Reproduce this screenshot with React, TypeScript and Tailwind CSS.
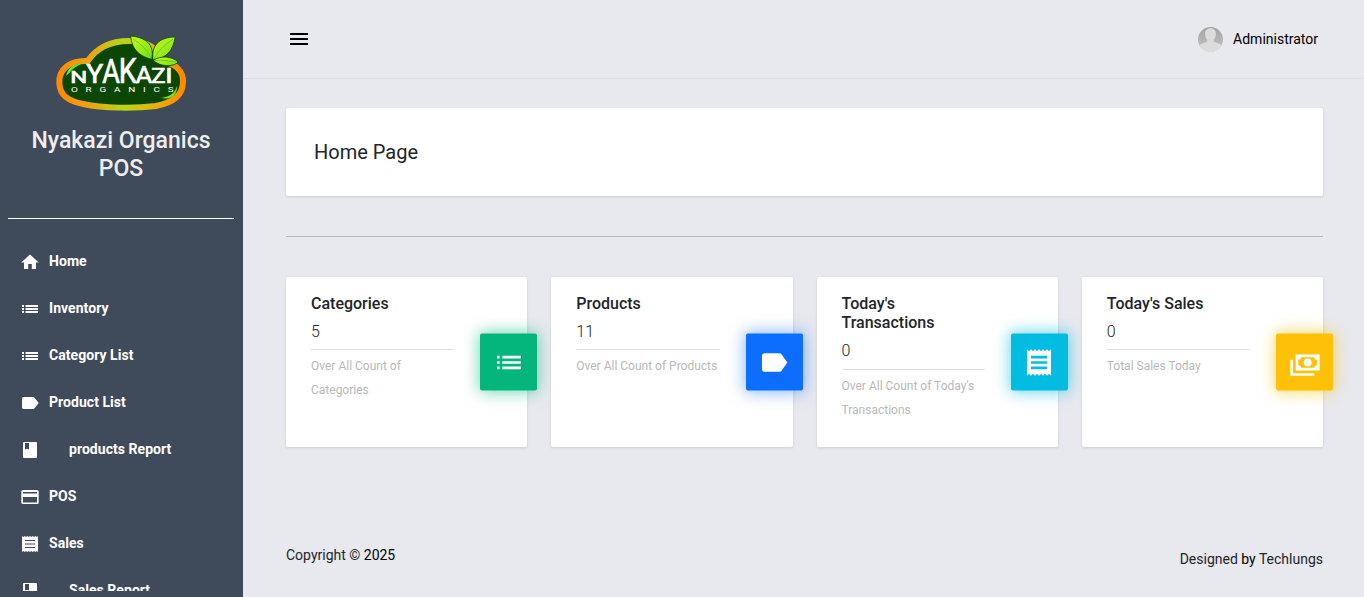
import React from "react";

const LIST = "M3 7h2v2H3zM3 11h2v2H3zM3 15h2v2H3zM7 7h14v2H7zM7 11h14v2H7zM7 15h14v2H7z";
const LABEL =
  "M17.63 5.84C17.27 5.33 16.67 5 16 5H5c-1.1 0-2 .9-2 2v10c0 1.1.9 2 2 2h11c.67 0 1.27-.33 1.63-.84L22 12z";
const RECEIPT =
  "M18 17H6v-2h12v2zm0-4H6v-2h12v2zm0-4H6V7h12v2zM3 22l1.5-1.5L6 22l1.5-1.5L9 22l1.5-1.5L12 22l1.5-1.5L15 22l1.5-1.5L18 22l1.5-1.5L21 22V2l-1.5 1.5L18 2l-1.5 1.5L15 2l-1.5 1.5L12 2l-1.5 1.5L9 2 7.5 3.5 6 2 4.5 3.5 3 2v20z";
const CASH =
  "M5 6H23V18H5V6M14 9A3 3 0 0 1 17 12A3 3 0 0 1 14 15A3 3 0 0 1 11 12A3 3 0 0 1 14 9M9 8A2 2 0 0 1 7 10V14A2 2 0 0 1 9 16H19A2 2 0 0 1 21 14V10A2 2 0 0 1 19 8H9M1 10H3V20H19V22H1V10Z";

function Icon({ d, className }: { d: string; className: string }) {
  return (
    <svg viewBox="0 0 24 24" fill="currentColor" fillRule="evenodd" className={className}>
      <path d={d} />
    </svg>
  );
}

const small = {
  home: <path d="M8.2 17v-5h3.6v5H16v-6.5h2.8L10 2.6 1.2 10.5H4V17z" />,
  list: <path d="M2 6h2v2H2zM2 9h2v2H2zM2 12h2v2H2zM5.5 6H18v2H5.5zM5.5 9H18v2H5.5zM5.5 12H18v2H5.5z" />,
  label: <path d="M14.5 4.7C14.2 4.3 13.8 4 13.2 4H3.5C2.7 4 2 4.7 2 5.500v9c0 .8.7 1.500 1.500 1.500h9.700c.6 0 1-.3 1.300-.7L18.700 10z" />,
  book: <path fillRule="evenodd" d="M4 2h12q1 0 1 1v14q0 1-1 1H4q-1 0-1-1V3q0-1 1-1zM5 3v6.500l2-.8 2 .8V3z" />,
  card: <path fillRule="evenodd" d="M3 3h14q1.700 0 1.700 1.500v11q0 1.500-1.700 1.500H3q-1.700 0-1.700-1.500v-11Q1.300 3 3 3zM3 5v1.500h14V5zM3 10v5.500h14V10z" />,
  receipt: (
    <path
      fillRule="evenodd"
      d="M2 2l1.330 1 1.330-1L6 3l1.330-1 1.330 1L10 2l1.330 1 1.330-1L14 3l1.330-1 1.330 1L18 2v16l-1.330-1-1.330 1L14 17l-1.330 1-1.330-1L10 18l-1.330-1-1.330 1L6 17l-1.330 1-1.330-1L2 18zM5 6v1h10V6zM5 9.500v1h10v-1zM5 13v1h10v-1z"
    />
  ),
};

const menu: { label: string; icon: keyof typeof small; nested?: boolean }[] = [
  { label: "Home", icon: "home" },
  { label: "Inventory", icon: "list" },
  { label: "Category List", icon: "list" },
  { label: "Product List", icon: "label" },
  { label: "products Report", icon: "book", nested: true },
  { label: "POS", icon: "card" },
  { label: "Sales", icon: "receipt" },
  { label: "Sales Report", icon: "book", nested: true },
];

const stats = [
  { title: "Categories", value: 5, note: "Over All Count of Categories", d: LIST, box: "bg-[#04b67c] shadow-[0_0_16px_1px_rgba(4,182,124,0.55)]" },
  { title: "Products", value: 11, note: "Over All Count of Products", d: LABEL, box: "bg-[#0d6efd] shadow-[0_0_16px_1px_rgba(13,110,253,0.5)]" },
  { title: "Today's Transactions", value: 0, note: "Over All Count of Today's Transactions", d: RECEIPT, box: "bg-[#02bce2] shadow-[0_0_16px_1px_rgba(2,188,226,0.6)]" },
  { title: "Today's Sales", value: 0, note: "Total Sales Today", d: CASH, box: "bg-[#ffc107] shadow-[0_0_16px_1px_rgba(255,193,7,0.6)]" },
];

function Logo() {
  return (
    <svg viewBox="0 0 480 285" className="-ml-[2px] h-[95px] w-[160px] shrink-0">
      <defs>
        <linearGradient id="rim" x1="0" y1="0" x2="1" y2="0">
          <stop offset="0" stopColor="#ff8a00" />
          <stop offset="0.22" stopColor="#f0a010" />
          <stop offset="0.52" stopColor="#b4d816" />
          <stop offset="0.78" stopColor="#e8b010" />
          <stop offset="1" stopColor="#ff8a00" />
        </linearGradient>
        <linearGradient id="leaf" x1="0" y1="0" x2="1" y2="1">
          <stop offset="0" stopColor="#c8fa18" />
          <stop offset="1" stopColor="#70e020" />
        </linearGradient>
      </defs>
      <path
        d="M58 175C56 132 88 106 143 108C172 66 215 47 270 48C325 48 352 70 365 109C407 116 431 139 429 172C428 218 389 235 347 243C283 251 190 250 130 237C84 228 60 211 58 175Z"
        fill="#0b4703"
        stroke="url(#rim)"
        strokeWidth="18"
      />
      <path d="M78 153C84 128 100 117 129 115C110 123 96 132 89 143Z" fill="#66e526" />
      <path d="M364 219C395 214 407 199 411 182C412 208 396 225 364 219Z" fill="#78e526" />
      <g fill="url(#leaf)" stroke="#0b4703" strokeWidth="2.500" strokeLinejoin="round">
        <path d="M335 103C290 91 276 68 272 33C315 37 345 57 335 103Z" />
        <path d="M339 105C333 60 359 36 406 36C398 75 385 98 339 105Z" />
        <path d="M339 106C364 91 394 93 415 111C399 127 361 126 339 106Z" />
      </g>
      <path d="M279 42Q318 65 334 101M399 43Q359 68 341 103M343 106Q376 104 408 111" fill="none" stroke="#5cb81a" strokeWidth="2" />
      <g fill="#fff" style={{ fontFamily: "Roboto, sans-serif" }} fontWeight="400">
        <g stroke="#fff" strokeWidth="2">
          <text x="91" y="173" fontSize="51" textLength="51" lengthAdjust="spacingAndGlyphs">N</text>
          <text x="139" y="173" fontSize="80" textLength="51" lengthAdjust="spacingAndGlyphs">Y</text>
          <text x="187" y="173" fontSize="100" textLength="53" lengthAdjust="spacingAndGlyphs">A</text>
          <text x="236" y="173" fontSize="104" textLength="54" lengthAdjust="spacingAndGlyphs">K</text>
          <text x="287" y="174" fontSize="72" textLength="49" lengthAdjust="spacingAndGlyphs">A</text>
          <text x="334" y="174" fontSize="58" textLength="43" lengthAdjust="spacingAndGlyphs">Z</text>
          <text x="376" y="174" fontSize="58" textLength="22" lengthAdjust="spacingAndGlyphs">I</text>
        </g>
        <text transform="translate(93 200) scale(1.35 1)" fontSize="22" textLength="228">ORGANICS</text>
      </g>
    </svg>
  );
}

export default function App() {
  return (
    <div className="flex h-[597px] w-full overflow-hidden bg-[#e8e9ef] font-['Roboto',sans-serif] text-[#212529]">
      <aside className="flex w-[243px] shrink-0 flex-col bg-[#3f4b5b] pt-[25px] pb-[6px]">
        <div className="flex flex-col items-center pr-px">
          <Logo />
          <h1 className="mt-[7px] w-[200px] text-center text-[23px] leading-7 font-medium text-[#eee]">
            Nyakazi Organics POS
          </h1>
        </div>
        <hr className="mt-[35px] mr-[9px] ml-2 border-white" />
        <nav className="mt-[19px] min-h-0 flex-1 overflow-hidden text-white">
          {menu.map((m) => (
            <a key={m.label} className="flex h-[47px] items-center pl-5 text-sm font-bold tracking-[0.05px]">
              <svg viewBox="0 0 20 20" fill="currentColor" className="mt-px h-5 w-5 shrink-0">
                {small[m.icon]}
              </svg>
              <span className={m.nested ? "-mt-[2px] ml-[29px]" : "-mt-[2px] ml-[9px]"}>{m.label}</span>
            </a>
          ))}
        </nav>
      </aside>

      <div className="flex min-w-0 flex-1 flex-col">
        <header className="flex h-[79px] shrink-0 items-center justify-between border-b border-[#dedfe4] pr-[46px] pl-[47px] text-black">
          <button aria-label="Toggle menu" className="flex w-[18px] flex-col gap-[3px]">
            <span className="h-[2px] bg-black" />
            <span className="h-[2px] bg-black" />
            <span className="h-[2px] bg-black" />
          </button>
          <div className="flex items-center gap-[10px] text-sm">
            <svg viewBox="0 0 25 25" className="h-[25px] w-[25px]">
              <defs>
                <clipPath id="avatar"><circle cx="12.500" cy="12.500" r="12.500" /></clipPath>
                <linearGradient id="shade" x1="0" y1="0" x2="0" y2="1">
                  <stop offset="0" stopColor="#a2a3a2" />
                  <stop offset="1" stopColor="#c4c4c4" />
                </linearGradient>
              </defs>
              <g clipPath="url(#avatar)">
                <path d="M0 0h25v25H0z" fill="url(#shade)" />
                <path d="M12.500 1.300c3.900 0 5.700 2.600 5.400 6.200-.2 2.500-1.100 4-2.200 5.300v2c2.500 1 6.600 1.500 8.300 4.200v7H1v-7c1.700-2.700 5.800-3.200 8.300-4.200v-2C8.200 11.500 7.300 10 7.100 7.500c-.3-3.600 1.500-6.200 5.400-6.200z" fill="#dcdcdc" />
              </g>
            </svg>
            <span>Administrator</span>
          </div>
        </header>

        <main className="flex-1 pt-[29px] pr-[41px] pl-[43px]">
          <section className="flex h-[88px] items-center rounded-[2px] bg-white pl-7 text-xl shadow-[0_1px_3px_rgba(0,0,0,0.12)]">
            <h2>Home Page</h2>
          </section>
          <hr className="mt-10 border-[#b7b9be]" />
          <div className="mt-10 grid grid-cols-4 gap-6">
            {stats.map((s) => (
              <section key={s.title} className="relative h-[170px] rounded-[2px] bg-white pt-[17px] pl-[25px] shadow-[0_1px_3px_rgba(0,0,0,0.12)]">
                <div className="w-[143.25px]">
                  <h3 className="w-[120px] text-base leading-[19.4px] font-medium">{s.title}</h3>
                  <p className="mt-[6.2px] text-base leading-6 font-light">{s.value}</p>
                  <hr className="mt-[5.500px] border-[#dee2e6]" />
                  <p className="mt-1 text-xs leading-6 text-[#b9b9b9]">{s.note}</p>
                </div>
                <div className={`absolute top-1/2 right-[-10px] flex h-[57px] w-[57px] [transform:translateY(-50%)] items-center justify-center rounded-[2px] text-white ${s.box}`}>
                  <Icon d={s.d} className="h-8 w-8" />
                </div>
              </section>
            ))}
          </div>
        </main>

        <footer className="flex h-[66px] shrink-0 justify-between pr-[41px] pl-[43px] text-sm">
          <p className="mt-[14px]">Copyright © <span className="text-black">2025</span></p>
          <p className="mt-[18px]">Designed <span className="text-black">by</span> Techlungs</p>
        </footer>
      </div>
    </div>
  );
}
